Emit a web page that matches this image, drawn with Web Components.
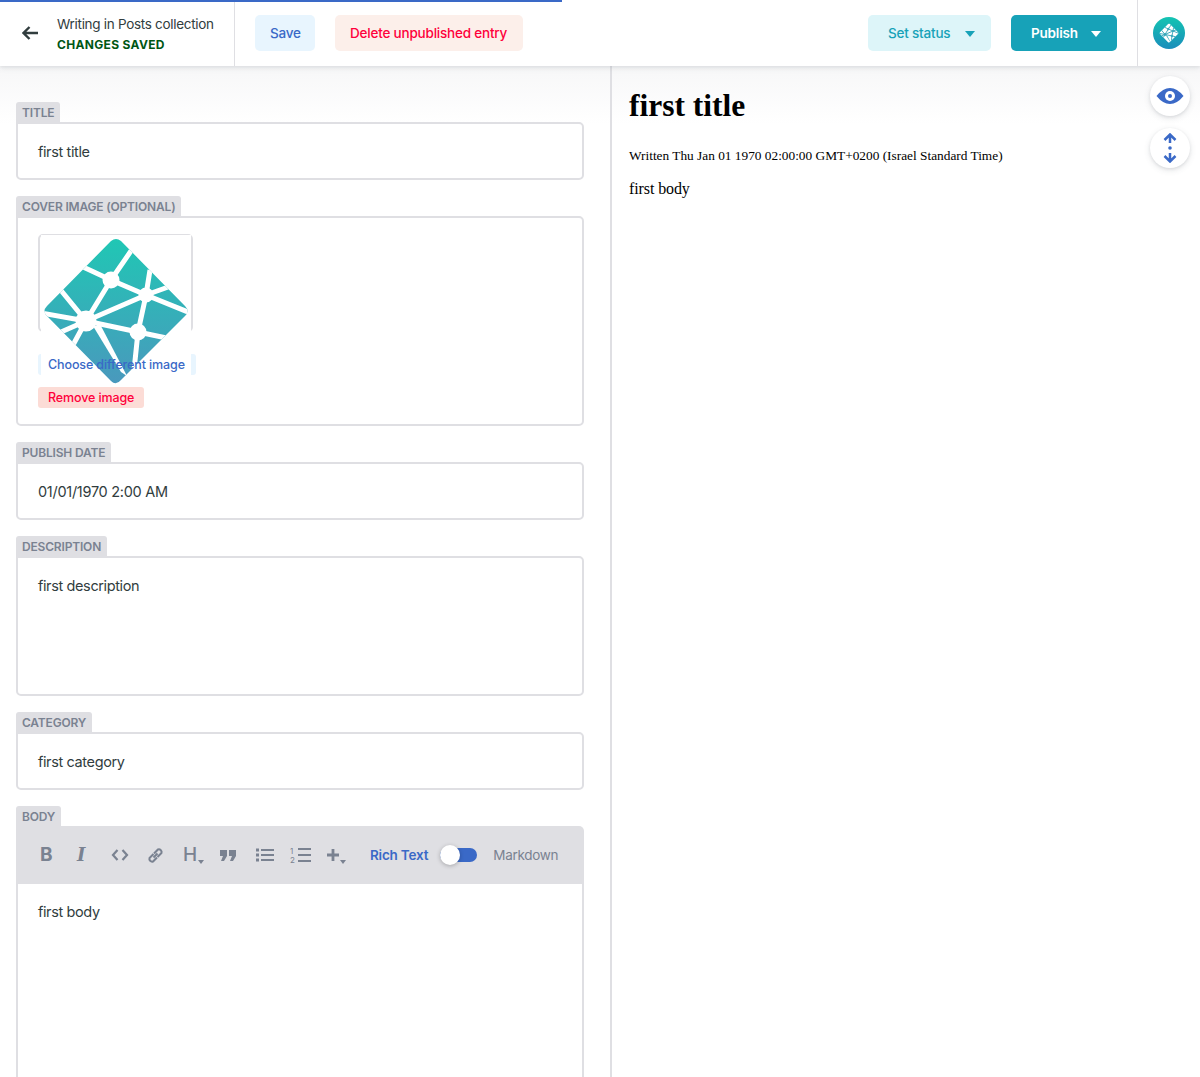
<!DOCTYPE html>
<html>
<head>
<meta charset="utf-8">
<title>Editor</title>
<style>
  html, body { margin: 0; height: 100%; overflow: hidden; background: #fff; }
  body { font-family: Inter, "Liberation Sans", sans-serif; color: #313d3e; }
</style>
</head>
<body>
<editor-app></editor-app>

<script>
// logo is used twice, big in the cover field and small in the top bar
const logoLines = (color, width) => `
  <g stroke="${color}" stroke-width="${width}" fill="none">
    <path d="M110 280L132 248M110 280L80 266M110 280L85 321M110 280L145 295M145 295L149 270M145 295L170 286M145 295L192 314M145 295L85 321M145 295L137 332M137 332L132 380M85 321L58 288M85 321L40 313M85 321L60 332M85 321L72 345M85 321L137 332M137 332L175 340"/>
    <circle cx="110" cy="280" r="6" fill="${color}"/><circle cx="145" cy="295" r="5" fill="${color}"/>
    <circle cx="85" cy="321" r="8" fill="${color}"/><circle cx="137" cy="332" r="6" fill="${color}"/>
  </g>
  <path d="M92 326L100 326L126 376L120 372Z" fill="${color}"/>`;

const diamond = 'M110 241Q115 237 120 241L184 306Q189 311 184 316L120 380Q115 386 110 381L46 316Q41 311 46 306Z';

class NetlifyLogo extends HTMLElement {
    constructor() {
        super();
        this.attachShadow({ mode: 'open' });
        const id = 'g' + Math.random().toString(36).slice(2);
        this.shadowRoot.innerHTML = `
            <style>:host { display: block; } svg { display: block; width: 100%; height: 100%; }</style>
            <svg viewBox="40 235 150 150">
                <defs>
                    <linearGradient id="${id}" x1="0" y1="0" x2="0" y2="1">
                        <stop offset="0" stop-color="#1fc8b4"/><stop offset="1" stop-color="#4a98bd"/>
                    </linearGradient>
                    <clipPath id="${id}c"><path d="${diamond}"/></clipPath>
                </defs>
                <g clip-path="url(#${id}c)">
                    <rect x="40" y="235" width="150" height="150" fill="url(#${id})"/>
                    ${logoLines('#fff', 5)}
                </g>
            </svg>`;
    }
}
customElements.define('netlify-logo', NetlifyLogo);

class SmallLogo extends HTMLElement {
    constructor() {
        super();
        this.attachShadow({ mode: 'open' });
        this.shadowRoot.innerHTML = `
            <style>
                :host { display: block; width: 32px; height: 32px; }
                svg { display: block; }
            </style>
            <svg width="32" height="32" viewBox="0 0 32 32">
                <defs>
                    <linearGradient id="a" x1="0" y1="0" x2="0" y2="1">
                        <stop offset="0" stop-color="#14c4b2"/><stop offset="1" stop-color="#1a8dbb"/>
                    </linearGradient>
                    <clipPath id="d"><path d="${diamond}"/></clipPath>
                </defs>
                <circle cx="16" cy="16" r="16" fill="url(#a)"/>
                <svg x="6" y="6" width="20" height="20" viewBox="40 235 150 150">
                    <g clip-path="url(#d)">
                        <rect x="40" y="235" width="150" height="150" fill="#fff"/>
                        ${logoLines('#3aa9bb', 7)}
                    </g>
                </svg>
            </svg>`;
    }
}
customElements.define('small-logo', SmallLogo);

class TopBar extends HTMLElement {
    constructor() {
        super();
        this.attachShadow({ mode: 'open' });
        this.shadowRoot.innerHTML = `
            <style>
                :host {
                    display: flex;
                    position: relative;
                    z-index: 5;
                    height: 66px;
                    flex: none;
                    background: #fff;
                    box-shadow: 0 2px 6px 0 rgba(68,74,87,0.1), 0 1px 3px 0 rgba(68,74,87,0.08);
                    font-size: 14px;
                }
                .progress { position: absolute; left: 0; top: 0; width: 562px; height: 2px; background: #3a69c7; }
                .back {
                    width: 235px;
                    box-sizing: border-box;
                    border-right: 1px solid #dfdfe3;
                    display: flex;
                    align-items: center;
                    padding-left: 22px;
                    gap: 19px;
                    margin-right: 20px;
                }
                .back svg { flex: none; }
                .heading { margin-top: 3px; }
                .title { line-height: 17px; font-size: 13.5px; letter-spacing: -0.3px; margin-top: 1px; }
                .saved { color: #005614; font-size: 12px; font-weight: 700; line-height: 18px; letter-spacing: 0.33px; margin-top: 3px; }
                .actions { display: flex; align-items: center; gap: 20px; }
                .actions.right { margin-left: auto; }
                button {
                    font: 500 13.5px Inter, "Liberation Sans", sans-serif;
                    letter-spacing: -0.2px;
                    height: 36px;
                    border: 0;
                    border-radius: 5px;
                    padding: 0 15px;
                    display: flex;
                    align-items: center;
                }
                .save { background: #e8f5fe; color: #3a69c7; width: 60px; }
                .delete { background: #fcefea; color: #ff003b; width: 188px; }
                .status { background: #ddf5f9; color: #17a2b8; padding: 0 16px 0 20px; width: 123px; }
                .publish { background: #17a2b8; color: #fff; padding: 0 16px 0 20px; width: 106px; font-weight: 600; }
                .caret { width: 0; height: 0; border: 5px solid transparent; border-top: 6px solid currentColor; border-bottom: 0; margin-left: auto; margin-top: 1px; }
                .avatar {
                    width: 63px;
                    box-sizing: border-box;
                    margin-left: 20px;
                    border-left: 1px solid #dfdfe3;
                    display: flex;
                    align-items: center;
                    padding-left: 15px;
                }
            </style>
            <div class="progress"></div>
            <div class="back">
                <svg width="16" height="14" viewBox="0 0 16 14"><path d="M16 7H2M7.5 1L1.500 7L7.500 13" fill="none" stroke="#313d3e" stroke-width="2.4"/></svg>
                <div class="heading">
                    <div class="title">Writing in Posts collection</div>
                    <div class="saved">CHANGES SAVED</div>
                </div>
            </div>
            <div class="actions">
                <button class="save">Save</button>
                <button class="delete">Delete unpublished entry</button>
            </div>
            <div class="actions right">
                <button class="status">Set status<span class="caret"></span></button>
                <button class="publish">Publish<span class="caret"></span></button>
            </div>
            <div class="avatar"><small-logo></small-logo></div>`;
    }
}
customElements.define('top-bar', TopBar);

class EditorField extends HTMLElement {
    constructor() {
        super();
        this.attachShadow({ mode: 'open' });
        this.shadowRoot.innerHTML = `
            <style>
                :host { display: block; margin-bottom: 16px; }
                .label {
                    display: inline-block;
                    vertical-align: top;
                    box-sizing: border-box;
                    height: 20px;
                    line-height: 20px;
                    padding: 1px 6px 0;
                    background: #dfdfe3;
                    color: #7a8291;
                    font-size: 12px;
                    font-weight: 600;
                    letter-spacing: -0.18px;
                    border-radius: 3px 3px 0 0;
                }
                .box {
                    box-sizing: border-box;
                    min-height: var(--h, 58px);
                    border: 2px solid #dfdfe3;
                    border-radius: 0 5px 5px 5px;
                    padding: 20px 20px 18px;
                    font-size: 14.5px;
                    letter-spacing: -0.38px;
                    line-height: 16px;
                    color: #313d3e;
                }
            </style>
            <div class="label"></div>
            <div class="box"><slot></slot></div>`;
    }
    connectedCallback() {
        this.shadowRoot.querySelector('.label').textContent = this.getAttribute('label');
        if (this.hasAttribute('height')) this.style.setProperty('--h', this.getAttribute('height') + 'px');
    }
}
customElements.define('editor-field', EditorField);

class CoverImage extends HTMLElement {
    constructor() {
        super();
        this.attachShadow({ mode: 'open' });
        this.shadowRoot.innerHTML = `
            <style>
                :host { display: block; position: relative; height: 172px; margin-top: -4px; font-size: 12.5px; font-weight: 500; letter-spacing: -0.12px; }
                .frame { box-sizing: border-box; width: 155px; height: 98px; border: 2px solid #dfdfe3; border-radius: 5px; }
                .btn { height: 21px; line-height: 21px; border-radius: 3px; padding: 0 10px; width: fit-content; }
                .choose { background: #e8f5fe; color: #3a69c7; margin-top: 22px; width: 138px; }
                .remove { background: #fcdcd6; color: #ff003b; margin-top: 12px; }
                .shot { position: absolute; left: 3px; top: 1px; width: 150px; height: 150px; background: #fff; }
                .shot netlify-logo { width: 150px; height: 150px; }
                .over { position: absolute; left: 10px; top: 120px; height: 21px; line-height: 21px; color: #3a69c7; }
                .gone { visibility: hidden; }
            </style>
            <div class="frame"></div>
            <div class="btn choose"><span class="gone">Choose different image</span></div>
            <div class="btn remove">Remove image</div>
            <div class="shot"><netlify-logo></netlify-logo></div>
            <div class="over">Choose different image</div>`;
    }
}
customElements.define('cover-image', CoverImage);

class RichEditor extends HTMLElement {
    constructor() {
        super();
        this.attachShadow({ mode: 'open' });
        this.shadowRoot.innerHTML = `
            <style>
                :host { display: block; }
                .label {
                    display: inline-block;
                    vertical-align: top;
                    box-sizing: border-box;
                    height: 20px;
                    line-height: 20px;
                    padding: 1px 6px 0;
                    background: #dfdfe3;
                    color: #7a8291;
                    font-size: 12px;
                    font-weight: 600;
                    letter-spacing: -0.18px;
                    border-radius: 3px 3px 0 0;
                }
                .toolbar {
                    height: 58px;
                    background: #dfdfe3;
                    border-radius: 0 5px 0 0;
                    display: flex;
                    align-items: center;
                    padding-left: 24px;
                    color: #7a8291;
                    position: relative;
                }
                .tool { flex: none; display: flex; align-items: center; height: 24px; }
                .b { font-weight: 700; font-size: 19px; line-height: 24px; }
                .i { font: italic 700 18px "DejaVu Serif", serif; line-height: 24px; }
                .h { font-weight: 500; font-size: 19px; line-height: 24px; }
                .sub { width: 0; height: 0; border: 3.5px solid transparent; border-top: 4px solid currentColor; border-bottom: 0; align-self: flex-end; margin: 0 0 3px 1px; }
                .mode { font-size: 13.5px; letter-spacing: -0.2px; display: flex; align-items: center; position: absolute; left: 354px; }
                .rich { color: #3a69c7; font-weight: 600; }
                .md { letter-spacing: -0.32px; }
                .switch { position: relative; width: 37px; height: 14px; background: #3a69c7; border-radius: 7px; margin: 0 16px 0 12px; }
                .switch i { position: absolute; left: 0; top: -3px; width: 20px; height: 20px; border-radius: 50%; background: #fff; box-shadow: 0 1px 4px rgba(0,0,0,0.25); }
                .body {
                    box-sizing: border-box;
                    min-height: 260px;
                    border: 2px solid #dfdfe3;
                    border-top: 0;
                    padding: 20px;
                    font-size: 14.5px;
                    letter-spacing: -0.38px;
                    line-height: 16px;
                }
            </style>
            <div class="label">BODY</div>
            <div class="toolbar">
                <div class="tool" style="width:36px"><span class="b">B</span></div>
                <div class="tool" style="width:35px;padding-left:1px;box-sizing:border-box"><span class="i">I</span></div>
                <div class="tool" style="width:36px"><svg width="18" height="14" viewBox="0 0 18 14"><path d="M6.500 2L2 7L6.500 12M11.500 2L16 7L11.500 12" fill="none" stroke="currentColor" stroke-width="2.200"/></svg></div>
                <div class="tool" style="width:36px"><svg width="17" height="17" viewBox="0 0 17 17"><path d="M6.500 10.500L10.500 6.500M6.500 7L2.500 11A2.800 2.800 0 0 0 6 14.500L10 10.500M7 6.500L11 2.500A2.800 2.800 0 0 1 14.500 6L10.500 10" fill="none" stroke="currentColor" stroke-width="2"/></svg></div>
                <div class="tool" style="width:37px"><span class="h">H</span><span class="sub"></span></div>
                <div class="tool" style="width:36px"><svg width="16" height="13" viewBox="0 0 16 13"><path d="M0 1H7V7L4 12H1L3 7H0ZM9 1H16V7L13 12H10L12 7H9Z" fill="currentColor"/></svg></div>
                <div class="tool" style="width:34px"><svg width="18" height="14" viewBox="0 0 18 14"><path d="M5 2H18M5 7H18M5 12H18" stroke="currentColor" stroke-width="2"/><path d="M0 0.500H3V3.500H0ZM0 5.500H3V8.500H0ZM0 10.500H3V13.500H0Z" fill="currentColor"/></svg></div>
                <div class="tool" style="width:37px"><svg width="21" height="18" viewBox="0 0 21 18"><text x="0" y="8" font-size="8" font-family="Inter" fill="currentColor">1</text><text x="0" y="17" font-size="8" font-family="Inter" fill="currentColor">2</text><path d="M8 3H21M8 9H21M8 15H21" stroke="currentColor" stroke-width="2"/></svg></div>
                <div class="tool"><svg width="12" height="12" viewBox="0 0 12 12"><path d="M6 0V12M0 6H12" stroke="currentColor" stroke-width="2.800"/></svg><span class="sub"></span></div>
                <div class="mode">
                    <span class="rich">Rich Text</span>
                    <span class="switch"><i></i></span>
                    <span class="md">Markdown</span>
                </div>
            </div>
            <div class="body"><slot></slot></div>`;
    }
}
customElements.define('rich-editor', RichEditor);

class PreviewPane extends HTMLElement {
    constructor() {
        super();
        this.attachShadow({ mode: 'open' });
        this.shadowRoot.innerHTML = `
            <style>
                :host {
                    display: block;
                    position: relative;
                    flex: 1;
                    min-width: 0;
                    padding: 0 17px;
                    font-family: "Liberation Serif", serif;
                    color: #000;
                    background: linear-gradient(#f7f7f8 0, #fff 58px);
                }
                h1 { font-size: 31.5px; line-height: 37px; margin: 21px 0 0; }
                .meta { font-size: 13.33px; line-height: 15px; margin: 24px 0 0; }
                .text { font-size: 16px; letter-spacing: -0.1px; line-height: 18px; margin: 17px 0 0; }
                .fab {
                    position: absolute;
                    left: 538px;
                    width: 40px;
                    height: 40px;
                    border-radius: 50%;
                    background: #fff;
                    box-shadow: 0 2px 6px rgba(68,74,87,0.15), 0 1px 3px rgba(68,74,87,0.1);
                    display: flex;
                    align-items: center;
                    justify-content: center;
                }
            </style>
            <h1>first title</h1>
            <div class="meta">Written Thu Jan 01 1970 02:00:00 GMT+0200 (Israel Standard Time)</div>
            <div class="text">first body</div>
            <div class="fab" style="top:10px">
                <svg width="28" height="16" viewBox="0 0 28 16"><path d="M0.500 8Q7 0 14 0T27.500 8Q21 16 14 16T0.500 8Z" fill="#3a69c7"/><circle cx="14" cy="8" r="5" fill="#fff"/><circle cx="14" cy="8" r="2" fill="#3a69c7"/></svg>
            </div>
            <div class="fab" style="top:62px">
                <svg width="14" height="30" viewBox="0 0 14 30"><path d="M7 10V1.500M1.500 7L7 1.500L12.500 7M7 20V28.500M1.500 23L7 28.500L12.500 23" fill="none" stroke="#3a69c7" stroke-width="2.500"/><circle cx="7" cy="15" r="1.800" fill="#3a69c7"/></svg>
            </div>`;
    }
}
customElements.define('preview-pane', PreviewPane);

class EditorApp extends HTMLElement {
    constructor() {
        super();
        this.attachShadow({ mode: 'open' });
        this.shadowRoot.innerHTML = `
            <style>
                :host { display: flex; flex-direction: column; height: 100vh; overflow: hidden; }
                .panes { flex: 1; display: flex; min-height: 0; }
                .form {
                    width: 612px;
                    box-sizing: border-box;
                    flex: none;
                    padding: 36px 26px 0 16px;
                    border-right: 2px solid #dfdfe3;
                    overflow: hidden;
                    background: linear-gradient(#f7f7f8 0, #fff 58px);
                }
            </style>
            <top-bar></top-bar>
            <div class="panes">
                <div class="form">
                    <editor-field label="TITLE">first title</editor-field>
                    <editor-field label="COVER IMAGE (OPTIONAL)"><cover-image></cover-image></editor-field>
                    <editor-field label="PUBLISH DATE"><span style="letter-spacing:-0.28px">01/01/1970 2:00 AM</span></editor-field>
                    <editor-field label="DESCRIPTION" height="140">first description</editor-field>
                    <editor-field label="CATEGORY">first category</editor-field>
                    <rich-editor>first body</rich-editor>
                </div>
                <preview-pane></preview-pane>
            </div>`;
    }
}
customElements.define('editor-app', EditorApp);
</script>
</body>
</html>
